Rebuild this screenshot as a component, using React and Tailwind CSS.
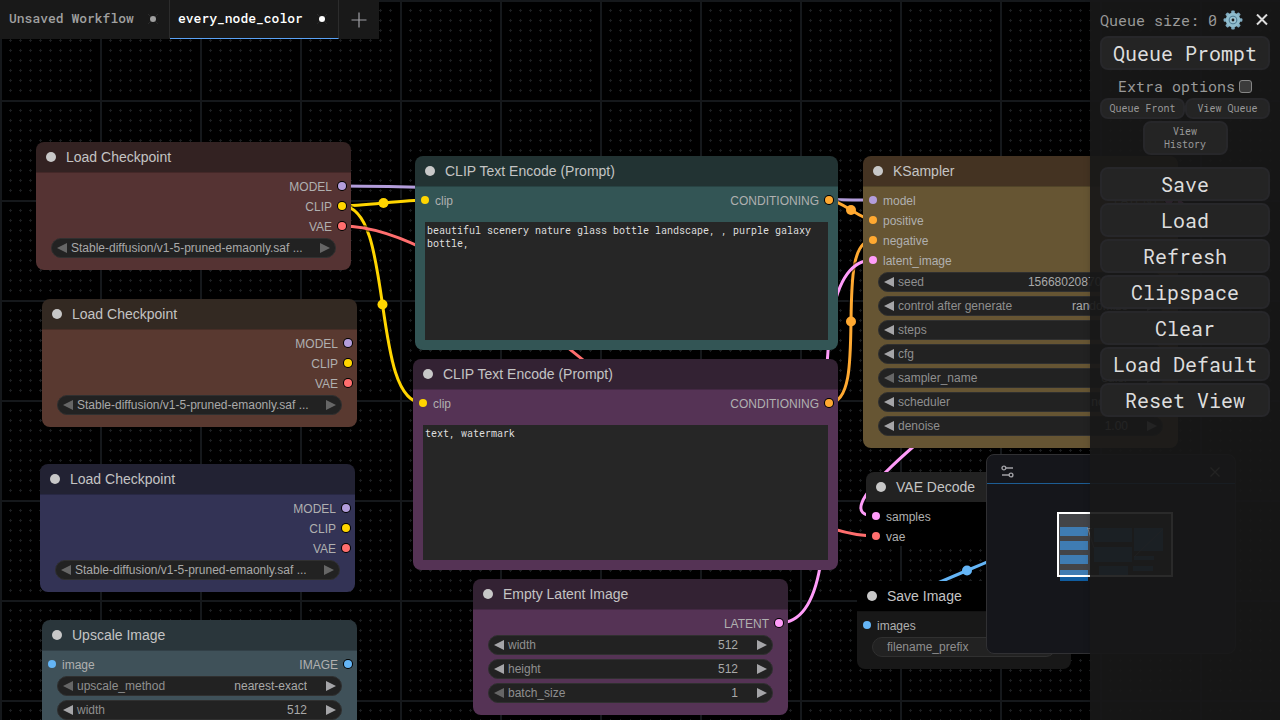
import { useId } from 'react';

const SLOT = {
  MODEL: 'bg-[#b39ddb]',
  CLIP: 'bg-[#ffd500]',
  VAE: 'bg-[#ff6e6e]',
  CONDITIONING: 'bg-[#ffa931]',
  LATENT: 'bg-[#ff9cf9]',
  IMAGE: 'bg-[#64b5f6]',
};

const CKPT = 'Stable-diffusion/v1-5-pruned-emaonly.saf ...';
const loaderOutputs = [['MODEL', 'MODEL'], ['CLIP', 'CLIP'], ['VAE', 'VAE']];
const loaderWidgets = [{ name: 'ckpt_name', hideName: true, value: CKPT, combo: true, prevOff: true, nextOff: true }];

const NODES = [
  {
    title: 'Load Checkpoint', place: 'left-[36px] top-[142px] w-[315px]', head: 'bg-[#332222]', body: 'bg-[#553333]',
    outputs: loaderOutputs, widgets: loaderWidgets,
  },
  {
    title: 'Load Checkpoint', place: 'left-[42px] top-[299px] w-[315px]', head: 'bg-[#332922]', body: 'bg-[#593930]',
    outputs: loaderOutputs, widgets: loaderWidgets,
  },
  {
    title: 'Load Checkpoint', place: 'left-[40px] top-[464px] w-[315px]', head: 'bg-[#222233]', body: 'bg-[#333355]',
    outputs: loaderOutputs, widgets: loaderWidgets,
  },
  {
    title: 'Upscale Image', place: 'left-[42px] top-[620px] w-[315px]', head: 'bg-[#2a363b]', body: 'bg-[#3f5159]',
    inputs: [['image', 'IMAGE']], outputs: [['IMAGE', 'IMAGE']],
    widgets: [
      { name: 'upscale_method', value: 'nearest-exact', combo: true, prevOff: true },
      { name: 'width', value: '512' },
    ],
  },
  {
    title: 'CLIP Text Encode (Prompt)', place: 'left-[415px] top-[156px] w-[423px]', head: 'bg-[#223333]', body: 'bg-[#335555]',
    inputs: [['clip', 'CLIP']], outputs: [['CONDITIONING', 'CONDITIONING']],
    text: 'beautiful scenery nature glass bottle landscape, , purple galaxy bottle,', textHeight: 'h-[118px]',
  },
  {
    title: 'CLIP Text Encode (Prompt)', place: 'left-[413px] top-[359px] w-[425px]', head: 'bg-[#332233]', body: 'bg-[#553355]',
    inputs: [['clip', 'CLIP']], outputs: [['CONDITIONING', 'CONDITIONING']],
    text: 'text, watermark', textHeight: 'h-[135px]',
  },
  {
    title: 'Empty Latent Image', place: 'left-[473px] top-[579px] w-[315px]', head: 'bg-[#332233]', body: 'bg-[#553355]',
    outputs: [['LATENT', 'LATENT']],
    widgets: [
      { name: 'width', value: '512' },
      { name: 'height', value: '512' },
      { name: 'batch_size', value: '1', prevOff: true },
    ],
  },
  {
    title: 'KSampler', place: 'left-[863px] top-[156px] w-[315px]', head: 'bg-[#443322]', body: 'bg-[#665533]',
    inputs: [['model', 'MODEL'], ['positive', 'CONDITIONING'], ['negative', 'CONDITIONING'], ['latent_image', 'LATENT']],
    outputs: [['LATENT', 'LATENT']],
    widgets: [
      { name: 'seed', value: '156680208700286' },
      { name: 'control after generate', value: 'randomize', combo: true },
      { name: 'steps', value: '20' },
      { name: 'cfg', value: '8.0' },
      { name: 'sampler_name', value: 'euler', combo: true, prevOff: true },
      { name: 'scheduler', value: 'normal', combo: true },
      { name: 'denoise', value: '1.00' },
    ],
  },
  {
    title: 'VAE Decode', place: 'left-[866px] top-[472px] w-[210px]', head: 'bg-[#222222]', body: 'bg-black',
    inputs: [['samples', 'LATENT'], ['vae', 'VAE']], outputs: [['IMAGE', 'IMAGE']],
  },
  {
    title: 'Save Image', place: 'left-[857px] top-[581px] w-[214px]', head: 'bg-black', body: 'bg-[#181818]',
    inputs: [['images', 'IMAGE']],
    widgets: [{ name: 'filename_prefix', value: '', plain: true }],
  },
];

const LINKS = [
  ['#b39ddb', 'M342 186C475 186 740 200 873 200'],
  ['#ffd500', 'M342 206C363 206 404 200 425 200', 383.5, 203],
  ['#ffd500', 'M342 206C395 206 370 403 423 403', 382.5, 304.5],
  ['#ff6e6e', 'M342 226C496 226 722 536 876 536'],
  ['#ffa931', 'M829 200C841 200 861 220 873 220', 851, 210],
  ['#ffa931', 'M829 403C871 403 831 240 873 240', 851, 321.5],
  ['#ff9cf9', 'M779 623C873 623 779 260 873 260'],
  ['#ff9cf9', 'M1169 200C1277 200 768 516 876 516'],
  ['#64b5f6', 'M1067 516C1124 516 810 625 867 625', 967, 570.5],
];

const DOTS = [10, 20, 30, 40, 50, 60, 70, 80, 90];

function Grid() {
  return (
    <svg className="absolute inset-0 size-full" aria-hidden="true">
      <defs>
        <pattern id="grid" width="100" height="100" patternUnits="userSpaceOnUse">
          {DOTS.map((y) =>
            DOTS.map((x) => (
              <path key={`${x}-${y}`} d={`M${x - 1} ${y + 0.5}h3M${x + 0.5} ${y - 1}v3`} stroke="#1b1d1f" strokeWidth="1" />
            ))
          )}
          <path d="M0 0H100V2H2V100H0Z" fill="#15181b" />
        </pattern>
      </defs>
      <rect width="100%" height="100%" fill="url(#grid)" />
      {LINKS.map(([color, d, cx, cy]) => (
        <g key={d} fill="none">
          <path d={d} stroke="#000" strokeOpacity="0.5" strokeWidth="6" />
          <path d={d} stroke={color} strokeWidth="3" />
          {cx && <circle cx={cx} cy={cy} r="5" fill={color} />}
        </g>
      ))}
    </svg>
  );
}

function Arrow({ label, off, next }) {
  return (
    <button type="button" aria-label={label} disabled={off} className={off ? 'text-[#666666]' : 'text-[#a5a5a8]'}>
      <svg className="block size-[10px]" viewBox="0 0 10 10" fill="currentColor">
        <path d={next ? 'M0 0L10 5L0 10Z' : 'M10 0L0 5L10 10Z'} />
      </svg>
    </button>
  );
}

function Widget({ name, hideName, value, combo, plain, prevOff, nextOff }) {
  const id = useId();
  const shell = 'flex h-5 items-center rounded-full border border-[#303030] bg-[#222222] text-xs';
  if (plain) {
    return (
      <div className={`${shell} px-[14px]`}>
        <label htmlFor={id} className="text-[#8f8f8f]">{name}</label>
        <input id={id} defaultValue={value} className="min-w-0 flex-1 bg-transparent text-right outline-none" />
      </div>
    );
  }
  const field = 'min-w-0 flex-1 appearance-none bg-transparent p-0 leading-4 text-[#a9a9a9] outline-none';
  return (
    <div className={`${shell} px-[5px]`}>
      <Arrow label={`Previous ${name}`} off={prevOff} />
      {!hideName && <label htmlFor={id} className="ml-1 text-[#8f8f8f]">{name}</label>}
      {combo ? (
        <select
          id={id}
          aria-label={name}
          className={`${field} ${hideName ? 'mr-2 ml-1' : 'mr-[19px] [text-align-last:right]'}`}
        >
          <option>{value}</option>
        </select>
      ) : (
        <input id={id} defaultValue={value} className={`${field} mr-[19px] text-right`} />
      )}
      <Arrow label={`Next ${name}`} off={nextOff} next />
    </div>
  );
}

function Node({ title, place, head, body, inputs = [], outputs = [], widgets = [], text, textHeight }) {
  return (
    <section className={`absolute ${place} overflow-hidden rounded-lg`}>
      <header className={`flex h-[30px] items-center gap-[10px] px-[10px] ${head}`}>
        <span className="size-[10px] rounded-full bg-[#c8c8c8]" />
        <h2 className="text-sm text-[#c4c4c4]">{title}</h2>
      </header>
      <div className={`shadow-[inset_0_1px_0_rgba(0,0,0,0.2)] ${body}`}>
        <div className="flex justify-between pt-1 text-xs text-[#b0b0b0]">
          <ul>
            {inputs.map(([name, type]) => (
              <li key={name} className="flex h-5 items-center gap-[6px] pl-[6px]">
                <span className={`size-2 rounded-full ${SLOT[type]}`} />
                <span className="pt-[2px]">{name}</span>
              </li>
            ))}
          </ul>
          <ul>
            {outputs.map(([name, type]) => (
              <li key={name} className="flex h-5 items-center justify-end gap-[6px] pr-[5px]">
                <span className="pt-[2px]">{name}</span>
                <span className={`size-2 rounded-full ring-1 ring-black ${SLOT[type]}`} />
              </li>
            ))}
          </ul>
        </div>
        {widgets.length > 0 && (
          <div className="flex flex-col gap-1 px-[15px] pt-[2px] pb-3">
            {widgets.map((w) => (
              <Widget key={w.name} {...w} />
            ))}
          </div>
        )}
        {text && (
          <div className="px-[10px] pt-3 pb-[10px]">
            <textarea
              aria-label="Prompt text"
              spellCheck={false}
              defaultValue={text}
              className={`block w-full resize-none bg-[#262626] p-[2px] font-['Roboto_Mono','Liberation_Mono',monospace] text-[10px] leading-[13px] text-[#dddddd] outline-none ${textHeight}`}
            />
          </div>
        )}
      </div>
    </section>
  );
}

function Tab({ name, active }) {
  return (
    <button
      type="button"
      role="tab"
      aria-selected={active}
      className={`flex h-full w-[169px] items-center justify-between border-r border-b border-r-[#2c2c2c] bg-[#191919] pr-[11px] pl-2 text-[13px] font-medium ${
        active ? 'border-b-[#5aa2f5] text-white' : 'border-b-[#191919] text-[#a0a0a0]'
      }`}
    >
      {name}
      <svg className="size-[10px]" viewBox="0 0 10 10">
        <path d="M0 0L10 10M10 0L0 10" stroke="#2a2a2a" />
        <circle cx="5" cy="5" r="3" fill="currentColor" />
      </svg>
    </button>
  );
}

const MAP_NODES = [
  [1060, 527, 28, 9], [1060, 541, 28, 9], [1060, 555, 28, 9], [1060, 570, 28, 11],
  [1094, 528, 38, 14], [1094, 547, 38, 15], [1099, 566, 29, 9],
  [1134, 528, 29, 23], [1134, 556, 20, 4], [1133, 566, 20, 5],
];

function Minimap() {
  return (
    <aside className="absolute right-[44px] bottom-[66px] flex h-[200px] w-[250px] flex-col overflow-hidden rounded-lg border border-[#303033] bg-[#15161b]">
      <div className="flex h-[29px] items-center justify-between border-b border-[#1d5d94] px-[14px] pt-[5px]">
        <button type="button" aria-label="Minimap settings">
          <svg className="block size-[13px]" viewBox="0 0 12 13" fill="none" stroke="#a0a0a5" strokeWidth="1.4">
            <circle cx="2.4" cy="3" r="1.9" />
            <path d="M4.3 3H11.5M0.5 10H7.6" />
            <circle cx="9.5" cy="10" r="1.9" />
          </svg>
        </button>
        <button type="button" aria-label="Close minimap">
          <svg className="block size-3" viewBox="-1 -1 12 12" stroke="#a0a0a5" strokeWidth="1.2">
            <path d="M0.5 0.5L9.5 9.5M9.5 0.5L0.5 9.5" />
          </svg>
        </button>
      </div>
      <svg className="block w-full flex-1" viewBox="987 484 248 169" aria-label="Workflow overview">
        <g fill="#0f5ca0">
          {MAP_NODES.map(([x, y, w, h]) => (
            <rect key={`${x}-${y}`} x={x} y={y} width={w} height={h} />
          ))}
        </g>
        <path d="M1087 528.5H1092M1088 529L1094 548M1163 529L1134 557" stroke="#8a8a8a" strokeOpacity="0.6" fill="none" />
        <rect x="1058" y="513" width="114" height="63" fill="#fff" fillOpacity="0.2" stroke="#fff" strokeWidth="2" />
      </svg>
    </aside>
  );
}

const menuButton = 'border-2 border-[#27272a] bg-[#242424] rounded-lg';

function MainButton({ children }) {
  return (
    <button type="button" className={`${menuButton} h-[34px] w-full text-xl leading-7 text-[#dddddd]`}>
      {children}
    </button>
  );
}

function SmallButton({ children }) {
  return (
    <button type="button" className={`${menuButton} w-1/2 px-1 py-[2px] text-[10px] leading-[13px] text-[#999999]`}>
      {children}
    </button>
  );
}

function Gear() {
  return (
    <svg className="block size-5" viewBox="0 0 20 20">
      <g fill="#7fabc0">
        {[0, 45, 90, 135].map((a) => (
          <rect key={a} x="8.2" y="0.6" width="3.6" height="18.8" rx="1" transform={`rotate(${a} 10 10)`} />
        ))}
      </g>
      <circle cx="10" cy="10" r="5.8" fill="none" stroke="#8fbccd" strokeWidth="3" />
      <circle cx="10" cy="10" r="4.3" fill="#4f7d94" />
      <circle cx="10" cy="10" r="3.2" fill="#9cc4d3" />
      <circle cx="10" cy="10" r="1.4" fill="#1c1c1c" />
    </svg>
  );
}

function Menu() {
  return (
    <aside className="absolute inset-y-0 right-0 w-[190px] bg-[#181818]/92 px-[10px] pt-1 font-['Roboto_Mono','DejaVu_Sans_Mono',monospace] shadow-[3px_3px_8px_rgba(0,0,0,0.4)]">
      <div className="flex h-8 items-center text-[15px] text-[#999999]">
        <span className="whitespace-nowrap">Queue size: 0</span>
        <button type="button" aria-label="Settings" className="ml-[6px]">
          <Gear />
        </button>
        <button type="button" aria-label="Close menu" className="ml-[13px]">
          <svg className="block size-3" viewBox="0 0 12 12" stroke="#dddddd" strokeWidth="2">
            <path d="M1 0.5L11 10.5M11 0.5L1 10.5" />
          </svg>
        </button>
      </div>
      <MainButton>Queue Prompt</MainButton>
      <label className="flex h-7 items-center justify-center gap-1 pt-1 text-[15px] text-[#999999]">
        Extra options
        <input type="checkbox" className="size-[13px] shrink-0 appearance-none rounded-[3px] border border-[#858585] bg-[#3b3b3b]" />
      </label>
      <div className="flex flex-wrap justify-center gap-y-[2px]">
        <SmallButton>Queue Front</SmallButton>
        <SmallButton>View Queue</SmallButton>
        <SmallButton>View<br />History</SmallButton>
      </div>
      <div className="mt-3 flex flex-col gap-[2px]">
        <MainButton>Save</MainButton>
        <MainButton>Load</MainButton>
        <MainButton>Refresh</MainButton>
        <MainButton>Clipspace</MainButton>
        <MainButton>Clear</MainButton>
        <MainButton>Load Default</MainButton>
        <MainButton>Reset View</MainButton>
      </div>
    </aside>
  );
}

export default function App() {
  return (
    <main className="relative h-screen overflow-hidden bg-black font-['Liberation_Sans',Arial,sans-serif]">
      <Grid />
      {NODES.map((n) => (
        <Node key={n.place} {...n} />
      ))}
      <nav role="tablist" className="relative flex h-[39px] w-fit bg-[#191919] pl-px font-['Roboto_Mono','DejaVu_Sans_Mono',monospace]">
        <Tab name="Unsaved Workflow" />
        <Tab name="every_node_color" active />
        <button type="button" aria-label="New workflow" className="flex w-10 items-center justify-center bg-[#191919]">
          <svg className="size-4" viewBox="0 0 16 16" stroke="#a0a0a5" strokeWidth="1.2">
            <path d="M8 0.5V15.5M0.5 8H15.5" />
          </svg>
        </button>
      </nav>
      <Minimap />
      <Menu />
    </main>
  );
}
